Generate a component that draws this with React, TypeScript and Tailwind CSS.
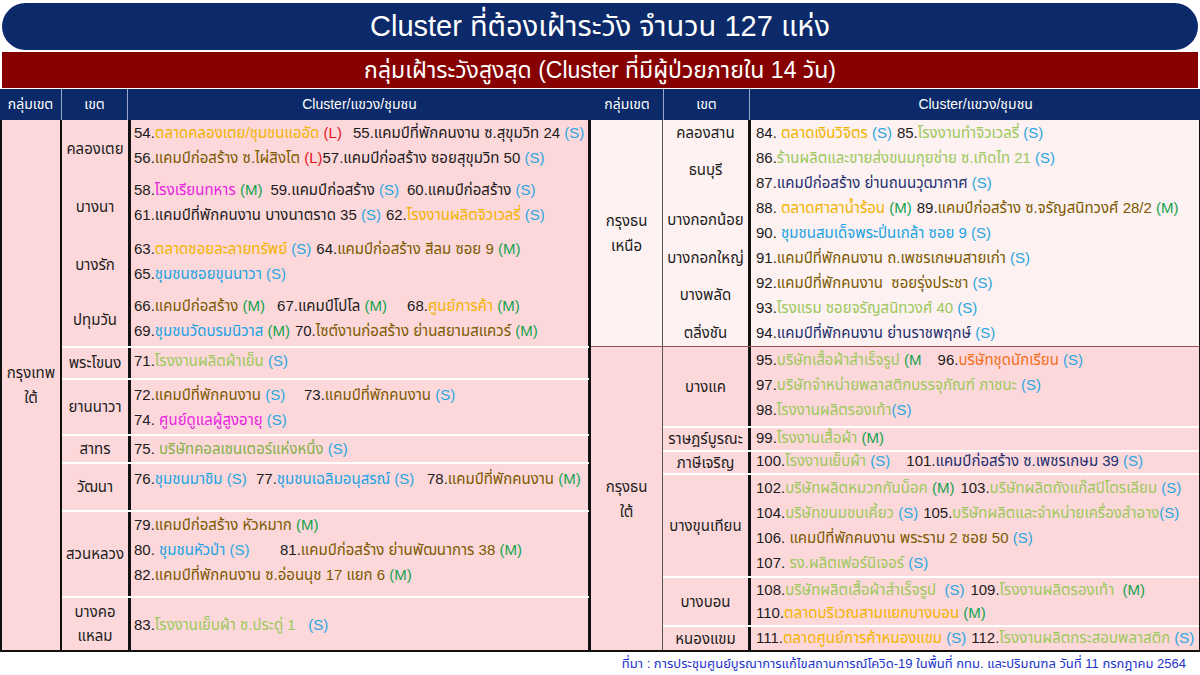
import React from "react";

const FONT = "font-['Liberation_Sans','Noto_Sans_Thai','Noto_Sans',sans-serif]";

const C = {
  k: "text-[#1c1c1c]",
  br: "text-[#7b5a00]",
  gd: "text-[#f3b300]",
  lg: "text-[#9cc85c]",
  ol: "text-[#86b04a]",
  cy: "text-[#19a3e3]",
  pk: "text-[#ea1fe0]",
  nv: "text-[#1d2f6f]",
  or: "text-[#f26f22]",
};

const TAG: Record<string, string> = {
  S: "text-[#2aa6e0]",
  M: "text-[#14a24e]",
  L: "text-[#e5141c]",
};

// num, name, colour, tag (with its own leading space), extra classes
type Item = [string, string, keyof typeof C, string, string?];
type Line = Item[];
type Row = {
  label: React.ReactNode;
  lines: Line[];
  h: string;
  top?: boolean;
  mid?: boolean;
  lh?: string;
};

function tagOf(tag: string) {
  const m = tag.match(/[SML]/);
  return m ? TAG[m[0]] : TAG.S;
}

function Entry({ item }: { item: Item }) {
  const [num, name, col, tag, extra] = item;
  return (
    <span className={`inline-block ${extra ?? "mr-[5px]"}`}>
      <span className="text-[#1c1c1c]">{num}</span>
      <span className={C[col]}>{name}</span>
      <span className={tagOf(tag)}>{tag}</span>
    </span>
  );
}

const LEFT_TOP: Row[] = [
  {
    label: "คลองเตย",
    h: "h-[57px]",
    lines: [
      [
        ["54.", "ตลาดคลองเตย/ชุมชนแออัด", "gd", " (L)", "min-w-[214px] mr-[5px]"],
        ["55.", "แคมป์ที่พักคนงาน ซ.สุขุมวิท 24", "k", " (S)"],
      ],
      [
        ["56.", "แคมป์ก่อสร้าง ซ.ไผ่สิงโต", "br", " (L)", "mr-0"],
        ["57.", "แคมป์ก่อสร้าง ซอยสุขุมวิท 50", "k", " (S)"],
      ],
    ],
  },
  {
    label: "บางนา",
    h: "h-[59px]",
    lines: [
      [
        ["58.", "โรงเรียนทหาร", "pk", " (M)", "min-w-[101px] mr-[8px]"],
        ["59.", "แคมป์ก่อสร้าง", "k", " (S)", "min-w-[112px] mr-[8px]"],
        ["60.", "แคมป์ก่อสร้าง", "k", " (S)"],
      ],
      [
        ["61.", "แคมป์ที่พักคนงาน บางนาตราด 35", "k", " (S)"],
        ["62.", "โรงงานผลิตจิวเวลรี่", "gd", " (S)"],
      ],
    ],
  },
  {
    label: "บางรัก",
    h: "h-[57px]",
    lines: [
      [
        ["63.", "ตลาดซอยละลายทรัพย์", "gd", " (S)"],
        ["64.", "แคมป์ก่อสร้าง สีลม ซอย 9", "br", " (M)"],
      ],
      [["65.", "ชุมชนซอยขุนนาวา", "cy", " (S)"]],
    ],
  },
  {
    label: "ปทุมวัน",
    h: "h-[53px]",
    lines: [
      [
        ["66.", "แคมป์ก่อสร้าง", "br", " (M)", "min-w-[110px] mr-[12px]"],
        ["67.", "แคมป์โปโล", "k", " (M)", "min-w-[118px] mr-[12px]"],
        ["68.", "ศูนย์การค้า", "gd", " (M)"],
      ],
      [
        ["69.", "ชุมชนวัดบรมนิวาส", "cy", " (M)"],
        ["70.", "ไซต์งานก่อสร้าง ย่านสยามสแควร์", "br", " (M)"],
      ],
    ],
  },
];

const LEFT_BOTTOM: Row[] = [
  {
    label: "พระโขนง",
    h: "h-[32px]",
    lines: [[["71.", "โรงงานผลิตผ้าเย็น", "lg", " (S)"]]],
  },
  {
    label: "ยานนาวา",
    h: "h-[56px]",
    top: true,
    lines: [
      [
        ["72.", "แคมป์ที่พักคนงาน", "br", " (S)", "min-w-[165px] mr-[5px]"],
        ["73.", "แคมป์ที่พักคนงาน", "br", " (S)"],
      ],
      [["74. ", "ศูนย์ดูแลผู้สูงอายุ", "pk", " (S)"]],
    ],
  },
  {
    label: "สาทร",
    h: "h-[28px]",
    lines: [[["75. ", "บริษัทคอลเซนเตอร์แห่งหนึ่ง", "ol", " (S)"]]],
  },
  {
    label: "วัฒนา",
    h: "h-[48px]",
    top: true,
    lines: [
      [
        ["76.", "ชุมชนมาชิม", "cy", " (S)", "min-w-[117px] mr-[5px]"],
        ["77.", "ชุมชนเฉลิมอนุสรณ์", "cy", " (S)", "min-w-[166px] mr-[5px]"],
        ["78.", "แคมป์ที่พักคนงาน", "br", " (M)"],
      ],
    ],
  },
  {
    label: "สวนหลวง",
    h: "h-[86px]",
    lines: [
      [["79.", "แคมป์ก่อสร้าง หัวหมาก", "br", " (M)"]],
      [
        ["80. ", "ชุมชนหัวป่า", "cy", " (S)", "min-w-[141px] mr-[5px]"],
        ["81.", "แคมป์ก่อสร้าง ย่านพัฒนาการ 38", "br", " (M)"],
      ],
      [["82.", "แคมป์ที่พักคนงาน ซ.อ่อนนุช 17 แยก 6", "br", " (M)"]],
    ],
  },
  {
    label: (
      <>
        บางคอ
        <br />
        แหลม
      </>
    ),
    h: "h-[54px]",
    mid: true,
    lines: [[["83.", "โรงงานเย็บผ้า ซ.ประดู่ 1", "lg", "\u00a0\u00a0\u00a0(S)"]]],
  },
];

const RIGHT_TOP: Row[] = [
  {
    label: "คลองสาน",
    h: "h-[25px]",
    lines: [
      [
        ["84. ", "ตลาดเงินวิจิตร", "gd", " (S)", "min-w-[111px] mr-[5px]"],
        ["85.", "โรงงานทำจิวเวลรี่", "lg", " (S)"],
      ],
    ],
  },
  {
    label: "ธนบุรี",
    h: "h-[50px]",
    lines: [
      [["86.", "ร้านผลิตและขายส่งขนมกุยช่าย ซ.เทิดไท 21", "lg", " (S)"]],
      [["87.", "แคมป์ก่อสร้าง ย่านถนนวุฒากาศ", "nv", " (S)"]],
    ],
  },
  {
    label: "บางกอกน้อย",
    h: "h-[50px]",
    lines: [
      [
        ["88. ", "ตลาดศาลาน้ำร้อน", "gd", " (M)", "min-w-[124px] mr-[5px]"],
        ["89.", "แคมป์ก่อสร้าง ซ.จรัญสนิทวงศ์ 28/2", "br", " (M)"],
      ],
      [["90. ", "ชุมชนสมเด็จพระปิ่นเกล้า ซอย 9", "cy", " (S)"]],
    ],
  },
  {
    label: "บางกอกใหญ่",
    h: "h-[25px]",
    lines: [[["91.", "แคมป์ที่พักคนงาน ถ.เพชรเกษมสายเก่า", "br", " (S)"]]],
  },
  {
    label: "บางพลัด",
    h: "h-[50px]",
    lines: [
      [["92.", "แคมป์ที่พักคนงาน\u00a0\u00a0ซอยรุ่งประชา", "br", " (S)"]],
      [["93.", "โรงแรม ซอยจรัญสนิทวงศ์ 40", "lg", " (S)"]],
    ],
  },
  {
    label: "ตลิ่งชัน",
    h: "h-[26px]",
    lines: [[["94.", "แคมป์ที่พักคนงาน ย่านราชพฤกษ์", "nv", " (S)"]]],
  },
];

const RIGHT_BOTTOM: Row[] = [
  {
    label: "บางแค",
    h: "h-[79px]",
    lines: [
      [
        ["95.", "บริษัทเสื้อผ้าสำเร็จรูป", "lg", " (M", "min-w-[143px] mr-[16px]"],
        ["96.", "บริษัทชุดนักเรียน", "or", " (S)"],
      ],
      [["97.", "บริษัทจำหน่ายพลาสติกบรรจุภัณฑ์ ภาชนะ", "lg", " (S)"]],
      [["98.", "โรงงานผลิตรองเท้า", "lg", "(S)"]],
    ],
  },
  {
    label: "ราษฎร์บูรณะ",
    h: "h-[24px]",
    lh: "leading-[19px]",
    lines: [[["99.", "โรงงานเสื้อผ้า", "lg", " (M)"]]],
  },
  {
    label: "ภาษีเจริญ",
    h: "h-[23px]",
    lh: "leading-[17px]",
    lines: [
      [
        ["100.", "โรงงานเย็บผ้า", "lg", " (S)", "min-w-[116px] mr-[16px]"],
        ["101.", "แคมป์ก่อสร้าง ซ.เพชรเกษม 39", "nv", " (S)"],
      ],
    ],
  },
  {
    label: "บางขุนเทียน",
    h: "h-[103px]",
    lines: [
      [
        ["102.", "บริษัทผลิตหมวกกันน็อค", "lg", " (M)", "min-w-[151px] mr-[6px]"],
        ["103.", "บริษัทผลิตถังแก๊สปิโตรเลียม", "lg", " (S)"],
      ],
      [
        ["104.", "บริษัทขนมขบเคี้ยว", "lg", " (S)"],
        ["105.", "บริษัทผลิตและจำหน่ายเครื่องสำอาง", "lg", "(S)"],
      ],
      [["106. ", "แคมป์ที่พักคนงาน พระราม 2 ซอย 50", "br", " (S)"]],
      [["107. ", "รง.ผลิตเฟอร์นิเจอร์", "lg", " (S)"]],
    ],
  },
  {
    label: "บางบอน",
    h: "h-[49px]",
    lh: "leading-[23px]",
    lines: [
      [
        ["108.", "บริษัทผลิตเสื้อผ้าสำเร็จรูป", "lg", "\u00a0\u00a0(S)", "min-w-[159px] mr-[6px]"],
        ["109.", "โรงงานผลิตรองเท้า", "lg", "\u00a0\u00a0(M)"],
      ],
      [["110.", "ตลาดบริเวณสามแยกบางบอน", "gd", " (M)"]],
    ],
  },
  {
    label: "หนองแขม",
    h: "h-[25px]",
    lh: "leading-[22px]",
    lines: [
      [
        ["111.", "ตลาดศูนย์การค้าหนองแขม", "gd", " (S)"],
        ["112.", "โรงงานผลิตกระสอบพลาสติก", "lg", " (S)"],
      ],
    ],
  },
];

function District({
  row,
  labelW,
  pl,
  sep,
}: {
  row: Row;
  labelW: string;
  pl: string;
  sep?: boolean;
}) {
  return (
    <div className={`flex ${row.h} ${sep ? "border-t-2 border-white" : ""}`}>
      <div
        className={`${labelW} shrink-0 border-r-[3px] border-[#111] flex items-center justify-center text-center leading-[24px] text-[#1c1c1c]`}
      >
        <div>{row.label}</div>
      </div>
      <div
        className={`flex-1 ${pl} ${row.lh ?? "leading-[25px]"} ${row.top ? "pt-[2px]" : ""} ${
          row.mid ? "flex flex-col justify-center" : ""
        }`}
      >
        {row.lines.map((line, i) => (
          <div key={i} className="whitespace-nowrap">
            {line.map((it) => (
              <Entry key={it[0]} item={it} />
            ))}
          </div>
        ))}
      </div>
    </div>
  );
}

function HeaderRow({ widths }: { widths: [string, string] }) {
  return (
    <div className="flex h-[31px] bg-[#0c2a69] text-white text-[14px]">
      <div className={`${widths[0]} shrink-0 border-r border-[#9aa8c8] flex items-center justify-center`}>
        กลุ่มเขต
      </div>
      <div className={`${widths[1]} shrink-0 border-r border-[#9aa8c8] flex items-center justify-center`}>
        เขต
      </div>
      <div className="flex-1 flex items-center justify-center">Cluster/แขวง/ชุมชน</div>
    </div>
  );
}

export default function App() {
  return (
    <div className={`w-[1200px] h-[675px] bg-white overflow-hidden ${FONT}`}>
      <div className="mx-[2px] mt-[3px] h-[47px] rounded-full bg-[#0c2a69] flex items-center justify-center text-white text-[29px]">
        Cluster ที่ต้องเฝ้าระวัง จำนวน 127 แห่ง
      </div>
      <div className="mx-[2px] mt-[2px] h-[36px] bg-[#870000] flex items-center justify-center text-white text-[23px]">
        กลุ่มเฝ้าระวังสูงสุด (Cluster ที่มีผู้ป่วยภายใน 14 วัน)
      </div>

      <div className="mt-[1px] flex text-[15px]">
        {/* south Bangkok */}
        <div className="w-[591px] shrink-0">
          <HeaderRow widths={["w-[62px]", "w-[66px]"]} />
          <div className="flex h-[532px] bg-[#fdd8db] border-l-2 border-b-2 border-r-[3px] border-[#111]">
            <div className="w-[60px] shrink-0 border-r-2 border-[#111] flex items-center justify-center text-center leading-[25px] text-[#1c1c1c]">
              <div>
                กรุงเทพ
                <br />
                ใต้
              </div>
            </div>
            <div className="flex-1 flex flex-col">
              <div className="h-[226px]">
                {LEFT_TOP.map((r) => (
                  <District key={String(r.label)} row={r} labelW="w-[69px]" pl="pl-[3px]" />
                ))}
              </div>
              {LEFT_BOTTOM.map((r, i) => (
                <District key={i} row={r} labelW="w-[69px]" pl="pl-[3px]" sep />
              ))}
            </div>
          </div>
        </div>

        {/* Thonburi */}
        <div className="flex-1">
          <HeaderRow widths={["w-[73px]", "w-[86px]"]} />
          <div className="h-[532px] border-b-2 border-r-2 border-[#111] flex flex-col">
            <div className="h-[226px] flex bg-[#fdf1f1]">
              <div className="w-[72px] shrink-0 border-r border-[#555] flex items-center justify-center text-center leading-[25px] text-[#1c1c1c]">
                <div>
                  กรุงธน
                  <br />
                  เหนือ
                </div>
              </div>
              <div className="flex-1">
                {RIGHT_TOP.map((r) => (
                  <District key={String(r.label)} row={r} labelW="w-[88px]" pl="pl-[5px]" />
                ))}
              </div>
            </div>
            <div className="flex-1 flex bg-[#fdd8db] border-t border-[#9a5050]">
              <div className="w-[72px] shrink-0 border-r border-[#555] flex items-center justify-center text-center leading-[25px] text-[#1c1c1c]">
                <div>
                  กรุงธน
                  <br />
                  ใต้
                </div>
              </div>
              <div className="flex-1">
                {RIGHT_BOTTOM.map((r, i) => (
                  <District key={i} row={r} labelW="w-[88px]" pl="pl-[5px]" sep={i > 0} />
                ))}
              </div>
            </div>
          </div>
        </div>
      </div>

      <div className="h-[23px] flex items-center justify-end pr-[14px] text-[13px] text-[#2233cc]">
        ที่มา : การประชุมศูนย์บูรณาการแก้ไขสถานการณ์โควิด-19 ในพื้นที่ กทม. และปริมณฑล วันที่ 11 กรกฎาคม 2564
      </div>
    </div>
  );
}
